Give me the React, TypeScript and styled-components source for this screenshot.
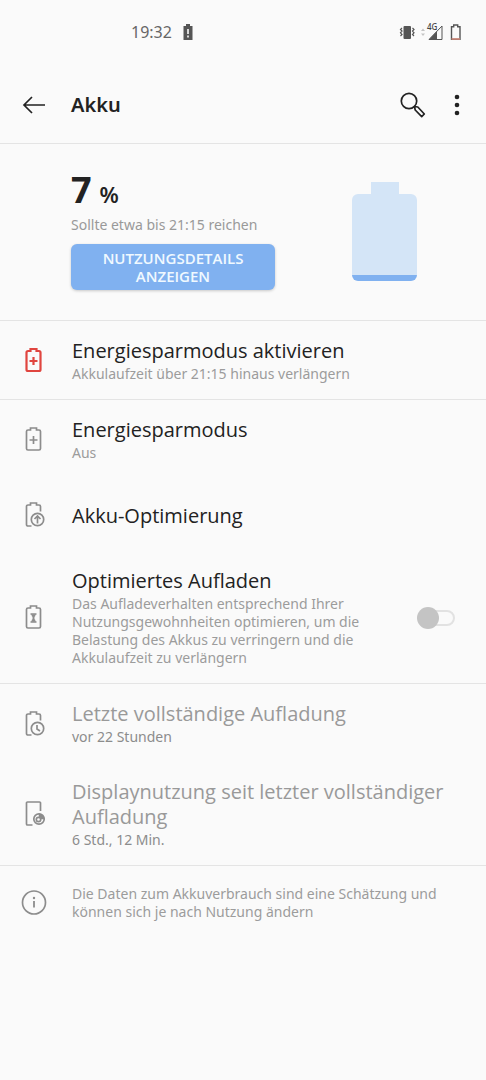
import React from "react";
import styled, { createGlobalStyle } from "styled-components";

const GlobalStyle = createGlobalStyle`
  *, *::before, *::after { box-sizing: border-box; }
  body {
    margin: 0;
    background: #fafafa;
    color: #222;
    font-family: "Noto Sans", "Open Sans", sans-serif;
  }
  svg { display: block; flex: none; }
`;

const Page = styled.div`
  min-height: 100vh;
  background: #fafafa;
`;

const StatusBar = styled.div`
  display: flex;
  align-items: center;
  height: 66px;
  padding: 0 24px 2px 131px;
  font-size: 16px;
  color: #666;
`;

const StatusNotice = styled.div`
  flex: 1;
  display: flex;
  align-items: center;
  gap: 11px;
`;

const Header = styled.header`
  display: flex;
  align-items: center;
  height: 78px;
  padding: 0 14px 0 20px;
  border-bottom: 1px solid #e4e4e4;
`;

const IconButton = styled.button`
  display: flex;
  align-items: center;
  justify-content: center;
  padding: 0;
  border: 0;
  background: none;
  color: #222;
`;

const Title = styled.h1`
  flex: 1;
  margin: 0 0 0 23px;
  font-size: 20px;
  font-weight: 600;
  line-height: 28px;
`;

const Actions = styled.div`
  display: flex;
  align-items: center;
  gap: 17px;
`;

const Hero = styled.section`
  display: flex;
  justify-content: space-between;
  align-items: flex-start;
  padding: 26px 69px 30px 71px;
`;

const HeroInfo = styled.div`
  display: flex;
  flex-direction: column;
  align-items: flex-start;
`;

const Level = styled.div`
  font-size: 36px;
  font-weight: 700;
  line-height: 40px;
  color: #222;
`;

const Unit = styled.span`
  margin-left: 8px;
  font-size: 22px;
  font-weight: 600;
`;

const Estimate = styled.div`
  margin: 2px 0 10px;
  font-size: 14px;
  line-height: 18px;
  color: #999;
`;

const DetailsButton = styled.button`
  width: 204px;
  padding: 5px 24px;
  border: 0;
  border-radius: 6px;
  background: #80b1f0;
  box-shadow: 0 1px 3px rgba(0, 0, 0, 0.2);
  color: #f0f9ff;
  font: 600 15px/18px "Open Sans", "Noto Sans", sans-serif;
`;

const HeroBattery = styled.svg`
  margin-top: 12px;
`;

const Group = styled.section`
  border-top: 1px solid #e4e4e4;
`;

const Row = styled.div`
  display: flex;
  align-items: center;
  min-height: 73px;
  padding: 17px 31px 16px 20px;
  color: #8c8c8c;
`;

const RowText = styled.div`
  flex: 1;
  margin-left: 24px;
`;

const RowTitle = styled.div<{ $muted?: boolean }>`
  font-family: "Open Sans", "Noto Sans", sans-serif;
  font-size: 20px;
  line-height: 25px;
  color: ${(p) => (p.$muted ? "#999" : "#222")};
`;

const RowSub = styled.div<{ $dark?: boolean }>`
  font-size: 14px;
  line-height: 18px;
  color: ${(p) => (p.$dark ? "#8c8c8c" : "#9c9c9c")};

  ${RowTitle} + & {
    margin-top: 2px;
  }
`;

const Toggle = styled.input`
  appearance: none;
  display: flex;
  align-items: center;
  flex: none;
  width: 38px;
  height: 22px;
  margin: 0 0 0 36px;
  position: relative;

  &::before {
    content: "";
    width: 34px;
    height: 16px;
    margin-left: 4px;
    border: 2px solid #e2e2e2;
    border-radius: 8px;
  }

  &::after {
    content: "";
    position: absolute;
    left: 0;
    top: 0;
    width: 22px;
    height: 22px;
    border-radius: 50%;
    background: #c4c4c4;
  }

  &:checked::after {
    left: 16px;
    background: #80b1f0;
  }
`;

type IconKind = "plus" | "optimize" | "hourglass" | "clock" | "display" | "info";

const whole = "M10.5 4V2h6v2H19a1.5 1.5 0 0 1 1.5 1.5v17A1.5 1.5 0 0 1 19 24H8A1.5 1.5 0 0 1 6.5 22.5V5.5A1.5 1.5 0 0 1 8 4z";
const cut = "M20.5 10.5V5.5A1.5 1.5 0 0 0 19 4h-2.5V2h-6v2H8a1.5 1.5 0 0 0-1.5 1.5V23.5A1.5 1.5 0 0 0 8 25h3.5";

function RowIcon({ kind, color = "#8c8c8c", weight = 1.7 }: { kind: IconKind; color?: string; weight?: number }) {
  return (
    <svg width="28" height="28" viewBox="0 0 28 28" fill="none" stroke={color} strokeWidth={weight} aria-hidden="true">
      {kind === "plus" && (
        <>
          <path d={whole} />
          <path d="M13.5 10v8M9.5 14h8" />
        </>
      )}
      {kind === "hourglass" && (
        <>
          <path d={whole} />
          <path d="M10.5 10h6M10.5 18h6" />
          <path d="M11.5 10.5h4L14 14l1.5 3.5h-4L13 14z" fill={color} strokeWidth="0.5" />
        </>
      )}
      {kind === "optimize" && (
        <>
          <path d={cut} />
          <circle cx="17.5" cy="18.5" r="6.2" />
          <path d="M17.5 22.5v-7M14.5 18l3-3 3 3" />
        </>
      )}
      {kind === "clock" && (
        <>
          <path d={cut} />
          <circle cx="17.5" cy="18.5" r="6.2" />
          <path d="M17 15v4l3 2" />
        </>
      )}
      {kind === "display" && (
        <>
          <path d="M20.5 11V3a1 1 0 0 0-1-1h-12a1 1 0 0 0-1 1v21a1 1 0 0 0 1 1h5" />
          <circle cx="19" cy="19" r="5.2" />
          <circle cx="18.5" cy="19.5" r="2.2" />
          <path d="M19 13.8a5.2 5.2 0 0 1 5.2 5.2h-3a2.5 2.5 0 0 0-2.2-2z" fill={color} strokeWidth="0.5" />
        </>
      )}
      {kind === "info" && (
        <>
          <circle cx="14" cy="13.5" r="11.5" />
          <path d="M14 12v6.500" strokeWidth="1.8" />
          <circle cx="14" cy="9" r="1.2" fill={color} stroke="none" />
        </>
      )}
    </svg>
  );
}

export default function App() {
  return (
    <Page>
      <GlobalStyle />
      <StatusBar>
        <StatusNotice>
          <span>19:32</span>
          <svg width="10" height="18" viewBox="0 0 10 18">
            <path d="M3 1h4v2h2.5v14h-9V3H3z" fill="#555" />
            <path d="M5 6v5M5 12.5v2" stroke="#fafafa" strokeWidth="1.6" />
          </svg>
        </StatusNotice>
        <svg width="63" height="20" viewBox="0 0 63 20" fill="none">
          <rect x="4.5" y="4" width="7.5" height="13" rx="1" fill="#555" />
          <path d="M3 6L1.5 7.5 3 9l-1.5 1.8L3 12.5 1.5 14M13.5 6L15 7.5 13.5 9l1.5 1.8-1.5 1.7L15 14" stroke="#555" strokeWidth="1.2" />
          <path d="M22 9l2-2.5L26 9zM22 11.5l2 2.5 2-2.5z" fill="#c4c4c4" />
          <path d="M30 17.5L43 4v13.5z" stroke="#555" />
          <path d="M30 17.5l8-8.3v8.3z" fill="#555" />
          <text x="28" y="8" fontFamily="Noto Sans, sans-serif" fontSize="8" fontWeight="500" fill="#444">4G</text>
          <path d="M52.5 4.7h2.2V3h4v1.7H61v12.5h-8.5z" stroke="#555" strokeWidth="1.4" />
          <path d="M52.5 17H61" stroke="#d98d7d" strokeWidth="1.5" />
        </svg>
      </StatusBar>

      <Header>
        <IconButton aria-label="Zurück">
          <svg width="28" height="28" viewBox="0 0 28 28" fill="none" stroke="#222" strokeWidth="1.7">
            <path d="M25 14H4M12 6l-8 8 8 8" />
          </svg>
        </IconButton>
        <Title>Akku</Title>
        <Actions>
          <IconButton aria-label="Suchen">
            <svg width="28" height="28" viewBox="0 0 28 28" fill="none" stroke="#222" strokeWidth="1.7">
              <circle cx="10" cy="10" r="7.7" />
              <path d="M15.5 15.5l3.3.5 6.5 7-2.6 2.700-6.5-6.7z" strokeLinejoin="round" />
            </svg>
          </IconButton>
          <IconButton aria-label="Weitere Optionen">
            <svg width="28" height="28" viewBox="0 0 28 28" fill="#222">
              <circle cx="13" cy="6" r="2.3" />
              <circle cx="13" cy="14" r="2.3" />
              <circle cx="13" cy="22" r="2.3" />
            </svg>
          </IconButton>
        </Actions>
      </Header>

      <main>
        <Hero>
          <HeroInfo>
            <Level>
              7<Unit>%</Unit>
            </Level>
            <Estimate>Sollte etwa bis 21:15 reichen</Estimate>
            <DetailsButton>NUTZUNGSDETAILS ANZEIGEN</DetailsButton>
          </HeroInfo>
          <HeroBattery width="65" height="100" viewBox="0 0 65 100" aria-hidden="true">
            <path d="M19 0h28v12h12a6 6 0 0 1 6 6v75H0V18a6 6 0 0 1 6-6h13z" fill="#d4e5f7" />
            <path d="M0 93h65a6 6 0 0 1-6 6H6a6 6 0 0 1-6-6z" fill="#80b1f0" />
          </HeroBattery>
        </Hero>

        <Group>
          <Row>
            <RowIcon kind="plus" color="#e0453f" weight={2.2} />
            <RowText>
              <RowTitle>Energiesparmodus aktivieren</RowTitle>
              <RowSub>Akkulaufzeit über 21:15 hinaus verlängern</RowSub>
            </RowText>
          </Row>
        </Group>

        <Group>
          <Row>
            <RowIcon kind="plus" />
            <RowText>
              <RowTitle>Energiesparmodus</RowTitle>
              <RowSub>Aus</RowSub>
            </RowText>
          </Row>
          <Row>
            <RowIcon kind="optimize" />
            <RowText>
              <RowTitle>Akku-Optimierung</RowTitle>
            </RowText>
          </Row>
          <Row as="label">
            <RowIcon kind="hourglass" />
            <RowText>
              <RowTitle>Optimiertes Aufladen</RowTitle>
              <RowSub>
                Das Aufladeverhalten entsprechend Ihrer Nutzungsgewohnheiten optimieren, um die Belastung des Akkus zu
                verringern und die Akkulaufzeit zu verlängern
              </RowSub>
            </RowText>
            <Toggle type="checkbox" role="switch" />
          </Row>
        </Group>

        <Group>
          <Row>
            <RowIcon kind="clock" />
            <RowText>
              <RowTitle $muted>Letzte vollständige Aufladung</RowTitle>
              <RowSub $dark>vor 22 Stunden</RowSub>
            </RowText>
          </Row>
          <Row>
            <RowIcon kind="display" />
            <RowText>
              <RowTitle $muted>Displaynutzung seit letzter vollständiger Aufladung</RowTitle>
              <RowSub $dark>6 Std., 12 Min.</RowSub>
            </RowText>
          </Row>
        </Group>

        <Group>
          <Row>
            <RowIcon kind="info" />
            <RowText>
              <RowSub>Die Daten zum Akkuverbrauch sind eine Schätzung und können sich je nach Nutzung ändern</RowSub>
            </RowText>
          </Row>
        </Group>
      </main>
    </Page>
  );
}
